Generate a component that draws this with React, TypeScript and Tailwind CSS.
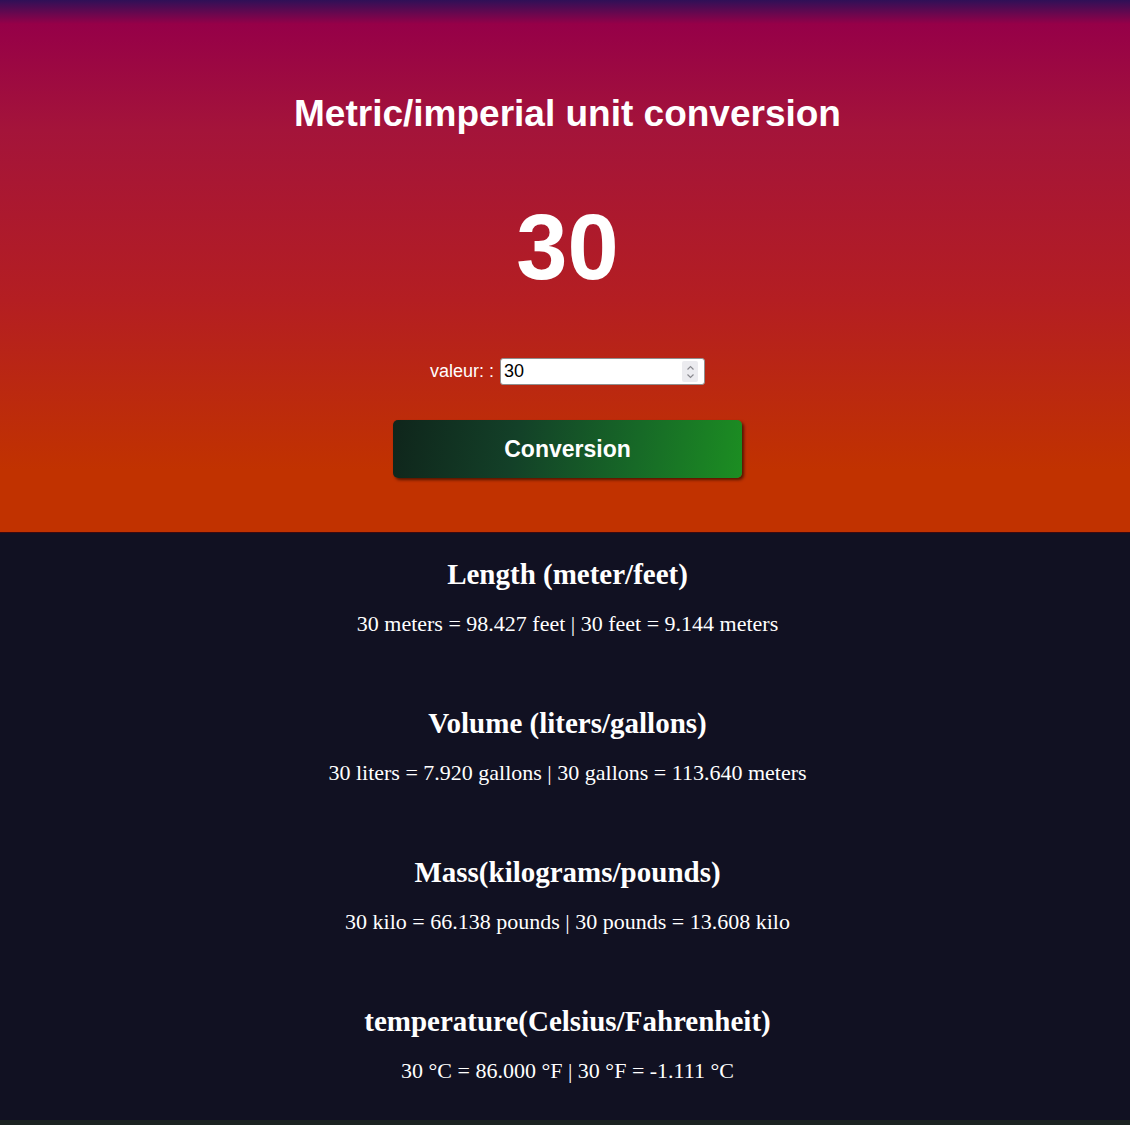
import { useState } from "react";

const sections = [
  {
    title: "Length (meter/feet)",
    text: "30 meters = 98.427 feet | 30 feet = 9.144 meters",
  },
  {
    title: "Volume (liters/gallons)",
    text: "30 liters = 7.920 gallons | 30 gallons = 113.640 meters",
  },
  {
    title: "Mass(kilograms/pounds)",
    text: "30 kilo = 66.138 pounds | 30 pounds = 13.608 kilo",
  },
  {
    title: "temperature(Celsius/Fahrenheit)",
    text: "30 °C = 86.000 °F | 30 °F = -1.111 °C",
  },
];

export default function App() {
  const [value, setValue] = useState("30");

  return (
    <div className="min-h-[1125px] bg-[#1b2221] font-['Liberation_Sans',Arial,sans-serif]">
      {/* Header with the input */}
      <header className="flex h-[533px] flex-col items-center border-b border-[#3a0a12] bg-[linear-gradient(to_bottom,#2f1057_0px,#960048_24px,#a4143a_130px,#b41e22_300px,#c13200_470px,#c13200_533px)] pl-[5px] text-white">
        <h1 className="mt-[93px] text-[37px] font-bold leading-[42px]">
          Metric/imperial unit conversion
        </h1>
        <div className="mt-[62px] text-[92px] font-bold leading-[100px]">{value}</div>
        <div className="mt-[61px] flex items-center gap-[6px]">
          <label htmlFor="val" className="text-[18px]">
            valeur: :
          </label>
          <div className="relative">
            <input
              id="val"
              type="number"
              value={value}
              onChange={(e) => setValue(e.target.value)}
              className="h-[27px] w-[205px] rounded-[3px] border border-[#8f8f8f] bg-white px-[3px] text-[18px] text-black [appearance:textfield] [&::-webkit-inner-spin-button]:appearance-none"
            />
            {/* spinner, always shown like in the screenshot */}
            <div className="pointer-events-none absolute right-[7px] top-[3px] flex h-[21px] w-[16px] flex-col items-center justify-center rounded-[2px] bg-[#ebebef]">
              <svg width="9" height="16" viewBox="0 0 9 16" fill="none" stroke="#8a8a90" strokeWidth="1.2">
                <path d="M1.5 5.5 L4.5 2.5 L7.5 5.5" />
                <path d="M1.5 10.5 L4.5 13.5 L7.5 10.5" />
              </svg>
            </div>
          </div>
        </div>
        <button className="mt-[35px] h-[58px] w-[349px] rounded-[5px] bg-[linear-gradient(100deg,#0f251b_0%,#134028_35%,#176a27_70%,#1c8e22_100%)] text-[23px] font-bold text-white shadow-[2px_2px_3px_rgba(40,10,0,0.7)]">
          Conversion
        </button>
      </header>

      {/* Results */}
      <main className="flex flex-col items-center gap-[69px] bg-[#111122] pb-[36px] pl-[5px] pt-[24px] text-center text-white font-['Liberation_Serif','Times_New_Roman',serif]">
        {sections.map((s) => (
          <section key={s.title} className="flex flex-col items-center">
            <h2 className="text-[29px] font-bold leading-[34px]">{s.title}</h2>
            <p className="mt-[20px] text-[22px] leading-[26px]">{s.text}</p>
          </section>
        ))}
      </main>
    </div>
  );
}
